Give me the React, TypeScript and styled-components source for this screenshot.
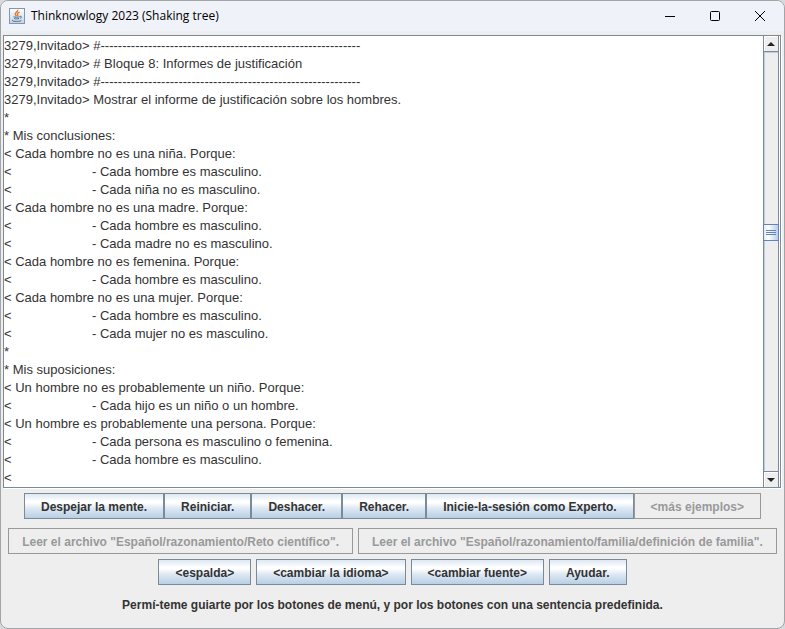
import React from "react";
import styled, { createGlobalStyle } from "styled-components";

const GlobalStyle = createGlobalStyle`
  *, *::before, *::after { box-sizing: border-box; }
  html, body, #root { height: 100%; }
  body { margin: 0; background: #d9dadd; overflow: hidden; }
`;

const Window = styled.main`
  height: 100%;
  display: flex;
  flex-direction: column;
  background: #eeeeee;
  border: 1px solid #a3a4a6;
  border-radius: 8px;
  overflow: hidden;
  font-family: "Liberation Sans", Arial, sans-serif;
  color: #333333;
`;

const TitleBar = styled.header`
  flex: none;
  height: 30px;
  display: flex;
  align-items: center;
  padding: 0 2px 0 8px;
  background: #f0f2f9;
`;

const Title = styled.h1`
  flex: 1;
  margin: 0 0 0 6px;
  font: 400 12px/16px "Open Sans", "Noto Sans", sans-serif;
  color: #000000;
`;

const CaptionButton = styled.button`
  width: 45px;
  height: 30px;
  padding: 0;
  border: 0;
  background: transparent;
  display: grid;
  place-items: center;
`;

const Console = styled.section`
  flex: 1;
  min-height: 0;
  display: flex;
  margin: 4px 3px 0 2px;
  padding-right: 1px;
  border: 1px solid #7a8a99;
  box-shadow: 1px 1px 0 #ffffff;
  background: #ffffff;
`;

const Output = styled.textarea`
  flex: 1;
  min-width: 0;
  margin: 0;
  padding: 1px 0 0;
  border: 0;
  outline: 0;
  resize: none;
  overflow: hidden;
  white-space: pre;
  tab-size: 88px;
  background: #ffffff;
  color: #333333;
  font: 13px/18px "Liberation Sans", Arial, sans-serif;
`;

const ScrollBar = styled.div`
  flex: none;
  width: 16px;
  display: flex;
  flex-direction: column;
  border-left: 1px solid #7a8a99;
  border-right: 1px solid #7a8a99;
  background: #eeeeee;
`;

const ArrowButton = styled.button`
  flex: none;
  height: 15px;
  padding: 0;
  border: 0;
  background: #eeeeee;
  box-shadow: inset 1px 1px 0 #ffffff;
  display: grid;
  place-items: center;
`;

const Track = styled.div`
  flex: 1;
  display: flex;
  flex-direction: column;
  border-top: 1px solid #7a8a99;
  border-bottom: 1px solid #7a8a99;
  box-shadow: inset 1px 1px 0 #b8cfe5;
`;

const TrackGap = styled.div<{ $share: number }>`
  flex: ${(p) => p.$share} 0 0;
`;

const Thumb = styled.div`
  flex: none;
  height: 17px;
  margin: 0 -1px;
  border: 1px solid #6382bf;
  background: linear-gradient(90deg, #dfe9f3, #ffffff 30%, #b8cfe5);
  display: grid;
  place-items: center;
`;

const Controls = styled.footer`
  flex: none;
  padding: 5px 6px 15px;
`;

const ButtonRow = styled.div<{ $gap: number; $after: number }>`
  display: flex;
  justify-content: center;
  gap: ${(p) => p.$gap}px;
  margin-bottom: ${(p) => p.$after}px;
`;

const MetalButton = styled.button<{ $inset: number }>`
  height: 26px;
  padding: 1px ${(p) => p.$inset}px 0;
  border: 1px solid #7a8a99;
  background: linear-gradient(#dde8f3, #ffffff 30%, #ffffff 36%, #dde8f3 60%, #b8cfe5);
  color: #333333;
  font: 700 12px/16px "Liberation Sans", Arial, sans-serif;
  white-space: nowrap;

  &:disabled {
    border-color: #999999;
    background: #eeeeee;
    color: #999999;
  }
`;

const Hint = styled.p`
  margin: 0;
  text-align: center;
  font: 700 12px/16px "Liberation Sans", Arial, sans-serif;
`;

const rule = "-".repeat(60);

const transcript = [
  `3279,Invitado> #${rule}`,
  "3279,Invitado> # Bloque 8: Informes de justificación",
  `3279,Invitado> #${rule}`,
  "3279,Invitado> Mostrar el informe de justificación sobre los hombres.",
  "*",
  "* Mis conclusiones:",
  "< Cada hombre no es una niña. Porque:",
  "<\t- Cada hombre es masculino.",
  "<\t- Cada niña no es masculino.",
  "< Cada hombre no es una madre. Porque:",
  "<\t- Cada hombre es masculino.",
  "<\t- Cada madre no es masculino.",
  "< Cada hombre no es femenina. Porque:",
  "<\t- Cada hombre es masculino.",
  "< Cada hombre no es una mujer. Porque:",
  "<\t- Cada hombre es masculino.",
  "<\t- Cada mujer no es masculino.",
  "*",
  "* Mis suposiciones:",
  "< Un hombre no es probablemente un niño. Porque:",
  "<\t- Cada hijo es un niño o un hombre.",
  "< Un hombre es probablemente una persona. Porque:",
  "<\t- Cada persona es masculino o femenina.",
  "<\t- Cada hombre es masculino.",
  "<",
].join("\n");

type Action = { label: string; disabled?: boolean };

const rows: { gap: number; after: number; inset: number; actions: Action[] }[] = [
  {
    gap: 0,
    after: 9,
    inset: 16,
    actions: [
      { label: "Despejar la mente." },
      { label: "Reiniciar." },
      { label: "Deshacer." },
      { label: "Rehacer." },
      { label: "Inicie-la-sesión como Experto." },
      { label: "<más ejemplos>", disabled: true },
    ],
  },
  {
    gap: 5,
    after: 5,
    inset: 13,
    actions: [
      { label: 'Leer el archivo "Español/razonamiento/Reto científico".', disabled: true },
      { label: 'Leer el archivo "Español/razonamiento/familia/definición de familia".', disabled: true },
    ],
  },
  {
    gap: 5,
    after: 12,
    inset: 16,
    actions: [
      { label: "<espalda>" },
      { label: "<cambiar la idioma>" },
      { label: "<cambiar fuente>" },
      { label: "Ayudar." },
    ],
  },
];

const JavaIcon = () => (
  <svg width="16" height="16" viewBox="0 0 16 16" fill="none" aria-hidden="true">
    <defs>
      <linearGradient id="tile" x1="0" y1="0" x2="0" y2="1">
        <stop offset="0" stopColor="#ffffff" />
        <stop offset="1" stopColor="#c3d3e0" />
      </linearGradient>
    </defs>
    <rect x=".5" y=".5" width="15" height="15" fill="url(#tile)" stroke="#7f98ad" />
    <path d="M8.7 1.8C9.4 3.7 5.4 4.6 6.3 6.4c.3.7 1 1.1 1.2 1.8M10.6 4.1C8.8 4.7 8 5.5 8.7 6.5c.4.6.3 1-.3 1.5" stroke="#e8792b" strokeWidth="1.4" />
    <path d="M4.6 8.8c1.4.6 4.6.5 6-.1M5.2 10.5c1.2.5 3.5.5 4.8 0M4 12c-2 .9 1.3 1.5 4.2 1.4 2.4-.1 4.7-.6 3.6-1.2M10.8 8.4c2.1-.6 2 1.5.1 2.1" stroke="#3f6c94" />
  </svg>
);

export default function App() {
  return (
    <>
      <GlobalStyle />
      <Window>
        <TitleBar>
          <JavaIcon />
          <Title>Thinknowlogy 2023 (Shaking tree)</Title>
          <CaptionButton type="button" aria-label="Minimizar">
            <svg width="12" height="12"><path d="M1 6.5h10" stroke="#000" /></svg>
          </CaptionButton>
          <CaptionButton type="button" aria-label="Maximizar">
            <svg width="12" height="12"><rect x="1.5" y="1.5" width="9" height="9" rx="1" fill="none" stroke="#000" /></svg>
          </CaptionButton>
          <CaptionButton type="button" aria-label="Cerrar">
            <svg width="12" height="12"><path d="M1 1l10 10M11 1L1 11" stroke="#000" /></svg>
          </CaptionButton>
        </TitleBar>
        <Console>
          <Output aria-label="Salida" readOnly spellCheck={false} wrap="off" value={transcript} />
          <ScrollBar>
            <ArrowButton type="button" aria-label="Subir">
              <svg width="8" height="4"><path d="M0 4L4 0l4 4z" fill="#222" /></svg>
            </ArrowButton>
            <Track>
              <TrackGap $share={172} />
              <Thumb>
                <svg width="10" height="5"><path d="M0 .5h10M0 2.5h10M0 4.5h10" stroke="#6382bf" /></svg>
              </Thumb>
              <TrackGap $share={229} />
            </Track>
            <ArrowButton type="button" aria-label="Bajar">
              <svg width="8" height="4"><path d="M0 0l4 4 4-4z" fill="#222" /></svg>
            </ArrowButton>
          </ScrollBar>
        </Console>
        <Controls>
          {rows.map((row) => (
            <ButtonRow key={row.actions[0].label} $gap={row.gap} $after={row.after}>
              {row.actions.map((a) => (
                <MetalButton key={a.label} type="button" disabled={a.disabled} $inset={row.inset}>
                  {a.label}
                </MetalButton>
              ))}
            </ButtonRow>
          ))}
          <Hint>Permí-teme guiarte por los botones de menú, y por los botones con una sentencia predefinida.</Hint>
        </Controls>
      </Window>
    </>
  );
}
